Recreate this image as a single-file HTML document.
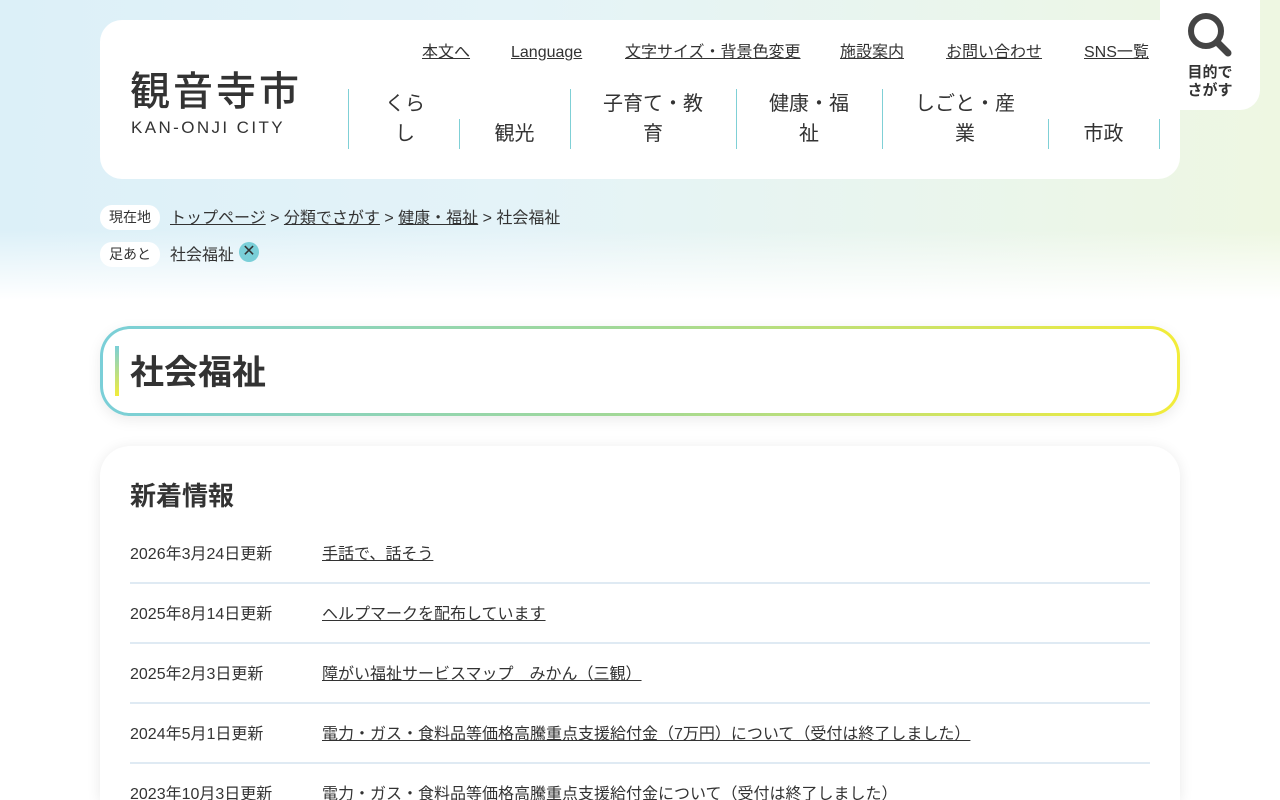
<!DOCTYPE html>
<html><head><meta charset="utf-8"><style>
*{margin:0;padding:0;box-sizing:border-box}
html,body{width:1280px;height:800px;overflow:hidden}
body{font-family:"Liberation Sans","Noto Sans CJK JP",sans-serif;color:#333;background:#fff;position:relative}
.bg{position:absolute;left:0;top:0;width:1280px;height:300px;background:linear-gradient(90deg,#dcf0f8 0%,#e4f3f8 40%,#e9f5ee 70%,#eef7e2 100%)}
.bg:after{content:"";position:absolute;left:0;right:0;bottom:0;height:70px;background:linear-gradient(180deg,rgba(255,255,255,0),#fff)}
.hdr{position:absolute;left:100px;top:20px;width:1080px;height:159px;background:#fff;border-radius:22px}
.a{position:absolute;top:42px;height:22px;line-height:22px;font-size:16px;color:#333;text-decoration:underline;white-space:nowrap}
.logo{position:absolute;left:130px;top:68px;font-size:40px;letter-spacing:3px;color:#333;font-weight:500;line-height:48px}
.logo2{position:absolute;left:131px;top:118px;font-size:17px;letter-spacing:2.4px;color:#333}
.nv{position:absolute;font-size:20px;color:#333;text-align:center;line-height:30px}
.dv{position:absolute;width:1px;background:#7fd0d6}
.srch{position:absolute;left:1160px;top:0;width:100px;height:110px;background:#fff;border-radius:0 0 20px 20px;text-align:center}
.bc{position:absolute;font-size:16px;line-height:20px;color:#333;white-space:nowrap}
.bc a{color:#333;text-decoration:underline}
.tag{position:absolute;left:100px;width:60px;height:25px;background:#fff;border-radius:12px;font-size:14px;text-align:center;line-height:25px}
.tt{position:absolute;left:100px;top:326px;width:1080px;height:90px;border-radius:30px;padding:3px;background:linear-gradient(90deg,#7acfd8,#a3d995 50%,#f2ec3a);box-shadow:0 4px 14px rgba(0,0,0,.08)}
.tt div{width:100%;height:100%;background:#fff;border-radius:27px;position:relative}
.card{position:absolute;left:100px;top:446px;width:1080px;height:354px;background:#fff;border-radius:30px 30px 0 0;box-shadow:0 2px 14px rgba(0,0,0,.09)}
.row{position:absolute;left:130px;width:1020px;height:39px;border-bottom:2px solid #dfeaf3;font-size:16px;line-height:20px}
.row span{position:absolute;top:0}
.row a{position:absolute;left:192px;top:0;color:#333;text-decoration:underline;white-space:nowrap}
</style></head><body>
<div class="bg"></div>
<div class="hdr"></div>
<div class="logo">観音寺市</div>
<div class="logo2">KAN-ONJI CITY</div>
<a class="a" style="left:422px">本文へ</a>
<a class="a" style="left:511px">Language</a>
<a class="a" style="left:625px">文字サイズ・背景色変更</a>
<a class="a" style="left:840px">施設案内</a>
<a class="a" style="left:946px">お問い合わせ</a>
<a class="a" style="left:1084px">SNS一覧</a>
<div class="dv" style="left:348px;top:89px;height:60px"></div>
<div class="dv" style="left:459px;top:119px;height:30px"></div>
<div class="dv" style="left:570px;top:89px;height:60px"></div>
<div class="dv" style="left:736px;top:89px;height:60px"></div>
<div class="dv" style="left:882px;top:89px;height:60px"></div>
<div class="dv" style="left:1048px;top:119px;height:30px"></div>
<div class="dv" style="left:1159px;top:119px;height:30px"></div>
<div class="nv" style="left:370px;top:89px;width:70px">くら<br>し</div>
<div class="nv" style="left:459px;top:119px;width:111px">観光</div>
<div class="nv" style="left:570px;top:89px;width:166px">子育て・教<br>育</div>
<div class="nv" style="left:736px;top:89px;width:146px">健康・福<br>祉</div>
<div class="nv" style="left:882px;top:89px;width:166px">しごと・産<br>業</div>
<div class="nv" style="left:1048px;top:119px;width:111px">市政</div>
<div class="srch">
<svg width="52" height="52" viewBox="0 0 52 52" style="position:absolute;left:24px;top:10px"><circle cx="22" cy="21" r="15" fill="none" stroke="#444" stroke-width="6"/><line x1="33" y1="32" x2="44" y2="43" stroke="#444" stroke-width="7" stroke-linecap="round"/></svg>
<div style="position:absolute;left:0;width:100px;top:64px;font-size:15px;font-weight:bold;line-height:18px;color:#333">目的で<br>さがす</div>
</div>
<div class="tag" style="top:205px">現在地</div>
<div class="bc" style="left:170px;top:209px"><a>トップページ</a> &gt; <a>分類でさがす</a> &gt; <a>健康・福祉</a> &gt; 社会福祉</div>
<div class="tag" style="top:242px">足あと</div>
<div class="bc" style="left:170px;top:246px">社会福祉</div>
<div style="position:absolute;left:239px;top:242px;width:20px;height:20px;border-radius:50%;background:#7acfd8;color:#333;font-size:16px;line-height:20px;text-align:center">✕</div>
<div class="tt"><div>
<span style="position:absolute;left:12px;top:17px;width:4px;height:50px;background:linear-gradient(180deg,#7acfd8,#f2ec3a)"></span>
<span style="position:absolute;left:27px;top:24px;font-size:34px;line-height:40px;font-weight:bold;color:#333">社会福祉</span>
</div></div>
<div class="card"></div>
<div style="position:absolute;left:130px;top:479px;font-size:26px;line-height:34px;font-weight:bold;color:#333">新着情報</div>
<div class="row" style="top:545px"><span>2026年3月24日更新</span><a>手話で、話そう</a></div>
<div class="row" style="top:605px"><span>2025年8月14日更新</span><a>ヘルプマークを配布しています</a></div>
<div class="row" style="top:665px"><span>2025年2月3日更新</span><a>障がい福祉サービスマップ　みかん（三観）</a></div>
<div class="row" style="top:725px"><span>2024年5月1日更新</span><a>電力・ガス・食料品等価格高騰重点支援給付金（7万円）について（受付は終了しました）</a></div>
<div class="row" style="top:785px"><span>2023年10月3日更新</span><a>電力・ガス・食料品等価格高騰重点支援給付金について（受付は終了しました）</a></div>
</body></html>
